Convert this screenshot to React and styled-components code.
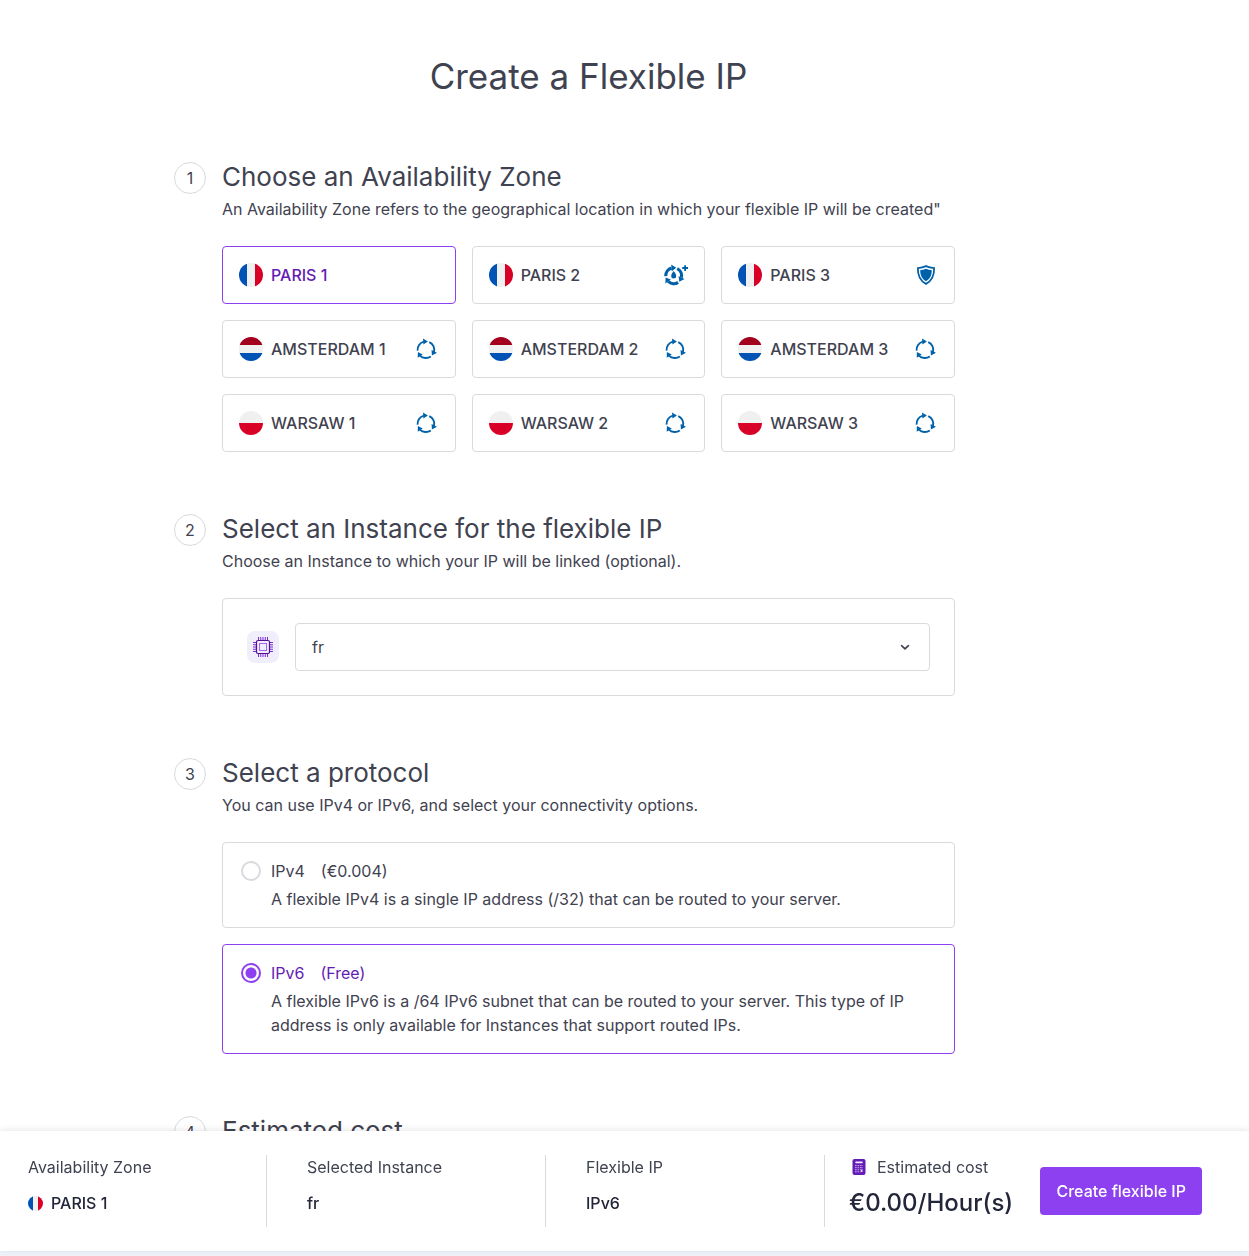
import React, { useState } from "react";
import styled, { createGlobalStyle } from "styled-components";

const color = {
  text: "#3f4250",
  strong: "#222638",
  border: "#d9dadd",
  primary: "#8c40ef",
  primaryText: "#641cb3",
  info: "#0061ab",
};

const GlobalStyle = createGlobalStyle`
  *, *::before, *::after { box-sizing: border-box; }
  body {
    margin: 0;
    background: #fff;
    color: ${color.text};
    font-family: Inter, "Liberation Sans", sans-serif;
    font-size: 16px;
    line-height: 24px;
  }
`;

const Shell = styled.div`
  display: flex;
  flex-direction: column;
  height: 100vh;
  background: #eff3f9;
`;

const Scroll = styled.main`
  flex: 1;
  min-height: 0;
  overflow-y: auto;
  scrollbar-width: none;
  padding: 54px 72px 48px 0;
  background: #fff;
`;

const Content = styled.div`
  max-width: 829px;
  margin: 0 auto;
`;

const Title = styled.h1`
  margin: 0 0 62px;
  text-align: center;
  font-size: 35px;
  line-height: 44px;
  font-weight: 400;
`;

const Steps = styled.div`
  display: flex;
  flex-direction: column;
  gap: 60px;
`;

const StepRow = styled.section`
  display: flex;
  gap: 16px;
  padding-right: 48px;
`;

const StepNumber = styled.span`
  flex: none;
  display: flex;
  align-items: center;
  justify-content: center;
  width: 32px;
  height: 32px;
  margin-top: 2px;
  border: 1px solid ${color.border};
  border-radius: 50%;
`;

const StepBody = styled.div`
  flex: 1;
  min-width: 0;
`;

const StepTitle = styled.h2`
  margin: 0 0 4px;
  font-size: 26px;
  line-height: 33px;
  font-weight: 400;
`;

const StepText = styled.p`
  margin: 0 0 25px;
`;

const ZoneGrid = styled.div`
  display: grid;
  grid-template-columns: repeat(3, 1fr);
  gap: 16px;
`;

const Card = styled.label`
  display: flex;
  border: 1px solid ${(p) => (p.$active ? color.primary : color.border)};
  border-radius: 4px;
  cursor: pointer;
`;

const ZoneCard = styled(Card)`
  align-items: center;
  gap: 8px;
  padding: 16px;
  font-weight: 500;
  color: ${(p) => (p.$active ? color.primaryText : color.text)};
`;

const ZoneName = styled.span`
  flex: 1;
`;

const HiddenRadio = styled.input`
  position: absolute;
  width: 1px;
  height: 1px;
  margin: 0;
  opacity: 0;
`;

const InstanceCard = styled.div`
  display: flex;
  align-items: center;
  gap: 16px;
  padding: 24px;
  border: 1px solid ${color.border};
  border-radius: 4px;
`;

const IconTile = styled.span`
  display: flex;
  align-items: center;
  justify-content: center;
  width: 32px;
  height: 32px;
  border-radius: 8px;
  background: #f1eefc;
`;

const SelectBox = styled.div`
  flex: 1;
  display: grid;
  align-items: center;

  & > * {
    grid-area: 1 / 1;
  }

  svg {
    justify-self: end;
    margin-right: 16px;
    pointer-events: none;
  }
`;

const Select = styled.select`
  appearance: none;
  width: 100%;
  height: 48px;
  padding: 0 16px;
  border: 1px solid ${color.border};
  border-radius: 4px;
  background: #fff;
  color: ${color.text};
  font: inherit;
`;

const ProtocolList = styled.div`
  display: flex;
  flex-direction: column;
  gap: 16px;
`;

const ProtocolCard = styled(Card)`
  gap: 10px;
  padding: 16px 16px 16px 18px;
`;

const Radio = styled.input`
  appearance: none;
  flex: none;
  width: 20px;
  height: 20px;
  margin: 2px 0;
  border: 2px solid ${color.border};
  border-radius: 50%;

  &:checked {
    border-color: ${color.primary};
    background: radial-gradient(circle, ${color.primary} 5px, #fff 6px);
  }
`;

const ProtocolBody = styled.span`
  display: flex;
  flex-direction: column;
  gap: 4px;
`;

const ProtocolName = styled.span`
  display: flex;
  gap: 16px;
  color: ${(p) => (p.$active ? color.primaryText : color.text)};
`;

const SummaryBar = styled.footer`
  z-index: 1;
  display: flex;
  margin-bottom: 5px;
  padding: 24px 47px 24px 28px;
  background: #fff;
  box-shadow: 0 -1px 6px rgba(34, 38, 56, 0.12);
`;

const SummaryCell = styled.div`
  flex: 1;
  height: 72px;
  margin-right: ${(p) => (p.$last ? 24 : 40)}px;
  border-right: 1px solid ${color.border};
`;

const SummaryLabel = styled.div`
  display: flex;
  align-items: center;
  gap: 8px;
`;

const SummaryValue = styled.div`
  display: flex;
  align-items: center;
  gap: 8px;
  margin-top: 12px;
  font-weight: 500;
  color: ${color.strong};
`;

const Checkout = styled.div`
  flex: 0 0 353px;
  display: flex;
  align-items: center;
  justify-content: space-between;
`;

const Cost = styled.div`
  align-self: flex-start;
`;

const Price = styled.div`
  margin-top: 8px;
  font-size: 24px;
  line-height: 32px;
  font-weight: 500;
  color: ${color.strong};
`;

const CreateButton = styled.button`
  height: 48px;
  padding: 0 16px;
  border: 0;
  border-radius: 4px;
  background: ${color.primary};
  color: #fff;
  font: inherit;
  font-weight: 500;
  cursor: pointer;
`;

const flags = {
  fr: { vertical: true, bands: ["#0052b4", "#f0f0f0", "#d80027"] },
  nl: { bands: ["#a2001d", "#f0f0f0", "#0052b4"] },
  pl: { bands: ["#f0f0f0", "#d80027"] },
};

function Flag({ country, size = 24 }) {
  const { vertical, bands } = flags[country];
  const id = `flag-${country}-${size}`;
  const step = 24 / bands.length;
  return (
    <svg width={size} height={size} viewBox="0 0 24 24" aria-hidden="true">
      <clipPath id={id}>
        <circle cx="12" cy="12" r="12" />
      </clipPath>
      <g clipPath={`url(#${id})`}>
        {bands.map((fill, i) => (
          <rect
            key={i}
            x={vertical ? i * step : 0}
            y={vertical ? 0 : i * step}
            width={vertical ? step : 24}
            height={vertical ? 24 : step}
            fill={fill}
          />
        ))}
      </g>
    </svg>
  );
}

const turns = [0, 120, 240];

function CycleIcon() {
  return (
    <svg width="24" height="24" viewBox="0 0 24 24" aria-hidden="true">
      {turns.map((turn) => (
        <g key={turn} transform={`rotate(${turn} 10.9 12.7)`}>
          <path
            d="M2.6 13.6A8.4 8.4 0 0 1 8.8 4.6"
            fill="none"
            stroke={color.info}
            strokeWidth="1.9"
          />
          <path d="M8 1.6 12.9 4.6 8.4 7.6Z" fill={color.info} />
        </g>
      ))}
    </svg>
  );
}

function WaterCycleIcon() {
  return (
    <svg width="24" height="24" viewBox="0 0 24 24" aria-hidden="true">
      {turns.map((turn) => (
        <g key={turn} transform={`rotate(${turn} 9.7 12.7)`}>
          <path
            d="M1.8 13.2A7.9 7.9 0 0 1 7.6 5.1"
            fill="none"
            stroke={color.info}
            strokeWidth="3.2"
          />
          <path d="M7.2 1.6 12.2 4.8 7.8 8.2Z" fill={color.info} />
        </g>
      ))}
      <g fill={color.info}>
        <path d="M9.7 8C11 9.9 12.2 11.2 12.2 13A2.5 2.5 0 0 1 7.2 13C7.2 11.2 8.4 9.9 9.7 8Z" />
        <path d="M20.2 2.2H22V4.1H24V5.9H22V8H20.2V5.9H18.2V4.1H20.2Z" />
      </g>
    </svg>
  );
}

function ShieldIcon() {
  return (
    <svg width="24" height="24" viewBox="0 0 24 24" aria-hidden="true">
      <path
        d="M12 3.1C14.9 4.4 17.1 4.8 20.1 5.1 20.4 12.5 18.1 17.6 12 20.9 5.9 17.6 3.6 12.5 3.9 5.1 6.9 4.8 9.1 4.4 12 3.1Z"
        fill="none"
        stroke={color.info}
        strokeWidth="1.8"
      />
      <path
        d="M12 5.7C14 6.5 15.8 7 17.8 7.2 17.8 12.3 16.1 15.7 12 18.2 7.9 15.7 6.2 12.3 6.2 7.2 8.2 7 10 6.5 12 5.7Z"
        fill={color.info}
      />
    </svg>
  );
}

function ChipIcon() {
  return (
    <svg width="20" height="20" viewBox="0 0 20 20" fill="none" aria-hidden="true">
      <path
        d="M5.5 0V3M7.75 0V3M10 0V3M12.25 0V3M14.5 0V3M5.5 17V20M7.75 17V20M10 17V20M12.25 17V20M14.5 17V20M0 5.5H3M0 7.75H3M0 10H3M0 12.25H3M0 14.5H3M17 5.5H20M17 7.75H20M17 10H20M17 12.25H20M17 14.5H20"
        stroke="#792dd4"
        strokeWidth="1"
      />
      <rect x="3.5" y="3.5" width="13" height="13" rx="1.5" stroke="#521094" strokeWidth="1.2" />
      <rect x="6.5" y="6.5" width="7" height="7" stroke="#a365f6" strokeWidth="1" />
    </svg>
  );
}

function CalculatorIcon() {
  return (
    <svg width="20" height="20" viewBox="0 0 20 20" aria-hidden="true">
      <rect x="3.5" y="2" width="13" height="16" rx="2" fill="#641cb3" />
      <rect x="6.3" y="4.5" width="7.4" height="1.7" rx=".6" fill="#f1eefc" />
      <g stroke="#c8a8f4" strokeWidth="1" strokeDasharray="1.7 .8">
        <path d="M6 8.6H14" />
        <path d="M6 10.7H14" />
        <path d="M6 12.8H14" />
        <path d="M6 14.8H11.8" />
      </g>
      <path d="M12.8 12.8V15" stroke="#f1eefc" strokeWidth="1.3" />
    </svg>
  );
}

function ChevronIcon() {
  return (
    <svg width="18" height="18" viewBox="0 0 18 18" aria-hidden="true">
      <path
        d="M5.6 7.7 9 10.8 12.4 7.7"
        fill="none"
        stroke={color.text}
        strokeWidth="1.7"
        strokeLinecap="round"
        strokeLinejoin="round"
      />
    </svg>
  );
}

const zones = [
  { name: "PARIS 1", country: "fr" },
  { name: "PARIS 2", country: "fr", Icon: WaterCycleIcon },
  { name: "PARIS 3", country: "fr", Icon: ShieldIcon },
  { name: "AMSTERDAM 1", country: "nl", Icon: CycleIcon },
  { name: "AMSTERDAM 2", country: "nl", Icon: CycleIcon },
  { name: "AMSTERDAM 3", country: "nl", Icon: CycleIcon },
  { name: "WARSAW 1", country: "pl", Icon: CycleIcon },
  { name: "WARSAW 2", country: "pl", Icon: CycleIcon },
  { name: "WARSAW 3", country: "pl", Icon: CycleIcon },
];

const protocols = [
  {
    name: "IPv4",
    price: "(€0.004)",
    text: "A flexible IPv4 is a single IP address (/32) that can be routed to your server.",
  },
  {
    name: "IPv6",
    price: "(Free)",
    text: "A flexible IPv6 is a /64 IPv6 subnet that can be routed to your server. This type of IP address is only available for Instances that support routed IPs.",
  },
];

function Step({ number, title, text, children }) {
  return (
    <StepRow>
      <StepNumber>{number}</StepNumber>
      <StepBody>
        <StepTitle>{title}</StepTitle>
        {text && <StepText>{text}</StepText>}
        {children}
      </StepBody>
    </StepRow>
  );
}

export default function App() {
  const [zone, setZone] = useState(zones[0]);
  const [protocol, setProtocol] = useState("IPv6");
  const [instance, setInstance] = useState("fr");

  return (
    <Shell>
      <GlobalStyle />
      <Scroll>
        <Content>
          <Title>Create a Flexible IP</Title>
          <Steps>
            <Step
              number={1}
              title="Choose an Availability Zone"
              text={'An Availability Zone refers to the geographical location in which your flexible IP will be created"'}
            >
              <ZoneGrid>
                {zones.map((z) => (
                  <ZoneCard key={z.name} $active={z === zone}>
                    <HiddenRadio
                      type="radio"
                      name="zone"
                      checked={z === zone}
                      onChange={() => setZone(z)}
                    />
                    <Flag country={z.country} />
                    <ZoneName>{z.name}</ZoneName>
                    {z.Icon && <z.Icon />}
                  </ZoneCard>
                ))}
              </ZoneGrid>
            </Step>
            <Step
              number={2}
              title="Select an Instance for the flexible IP"
              text="Choose an Instance to which your IP will be linked (optional)."
            >
              <InstanceCard>
                <IconTile>
                  <ChipIcon />
                </IconTile>
                <SelectBox>
                  <Select
                    aria-label="Instance"
                    value={instance}
                    onChange={(e) => setInstance(e.target.value)}
                  >
                    <option value="fr">fr</option>
                  </Select>
                  <ChevronIcon />
                </SelectBox>
              </InstanceCard>
            </Step>
            <Step
              number={3}
              title="Select a protocol"
              text="You can use IPv4 or IPv6, and select your connectivity options."
            >
              <ProtocolList>
                {protocols.map((p) => (
                  <ProtocolCard key={p.name} $active={p.name === protocol}>
                    <Radio
                      type="radio"
                      name="protocol"
                      checked={p.name === protocol}
                      onChange={() => setProtocol(p.name)}
                    />
                    <ProtocolBody>
                      <ProtocolName $active={p.name === protocol}>
                        <span>{p.name}</span>
                        <span>{p.price}</span>
                      </ProtocolName>
                      <span>{p.text}</span>
                    </ProtocolBody>
                  </ProtocolCard>
                ))}
              </ProtocolList>
            </Step>
            <Step number={4} title="Estimated cost" />
          </Steps>
        </Content>
      </Scroll>
      <SummaryBar>
        <SummaryCell>
          <SummaryLabel>Availability Zone</SummaryLabel>
          <SummaryValue>
            <Flag country={zone.country} size={15} />
            {zone.name}
          </SummaryValue>
        </SummaryCell>
        <SummaryCell>
          <SummaryLabel>Selected Instance</SummaryLabel>
          <SummaryValue>{instance}</SummaryValue>
        </SummaryCell>
        <SummaryCell $last>
          <SummaryLabel>Flexible IP</SummaryLabel>
          <SummaryValue>{protocol}</SummaryValue>
        </SummaryCell>
        <Checkout>
          <Cost>
            <SummaryLabel>
              <CalculatorIcon />
              Estimated cost
            </SummaryLabel>
            <Price>€0.00/Hour(s)</Price>
          </Cost>
          <CreateButton type="button">Create flexible IP</CreateButton>
        </Checkout>
      </SummaryBar>
    </Shell>
  );
}
